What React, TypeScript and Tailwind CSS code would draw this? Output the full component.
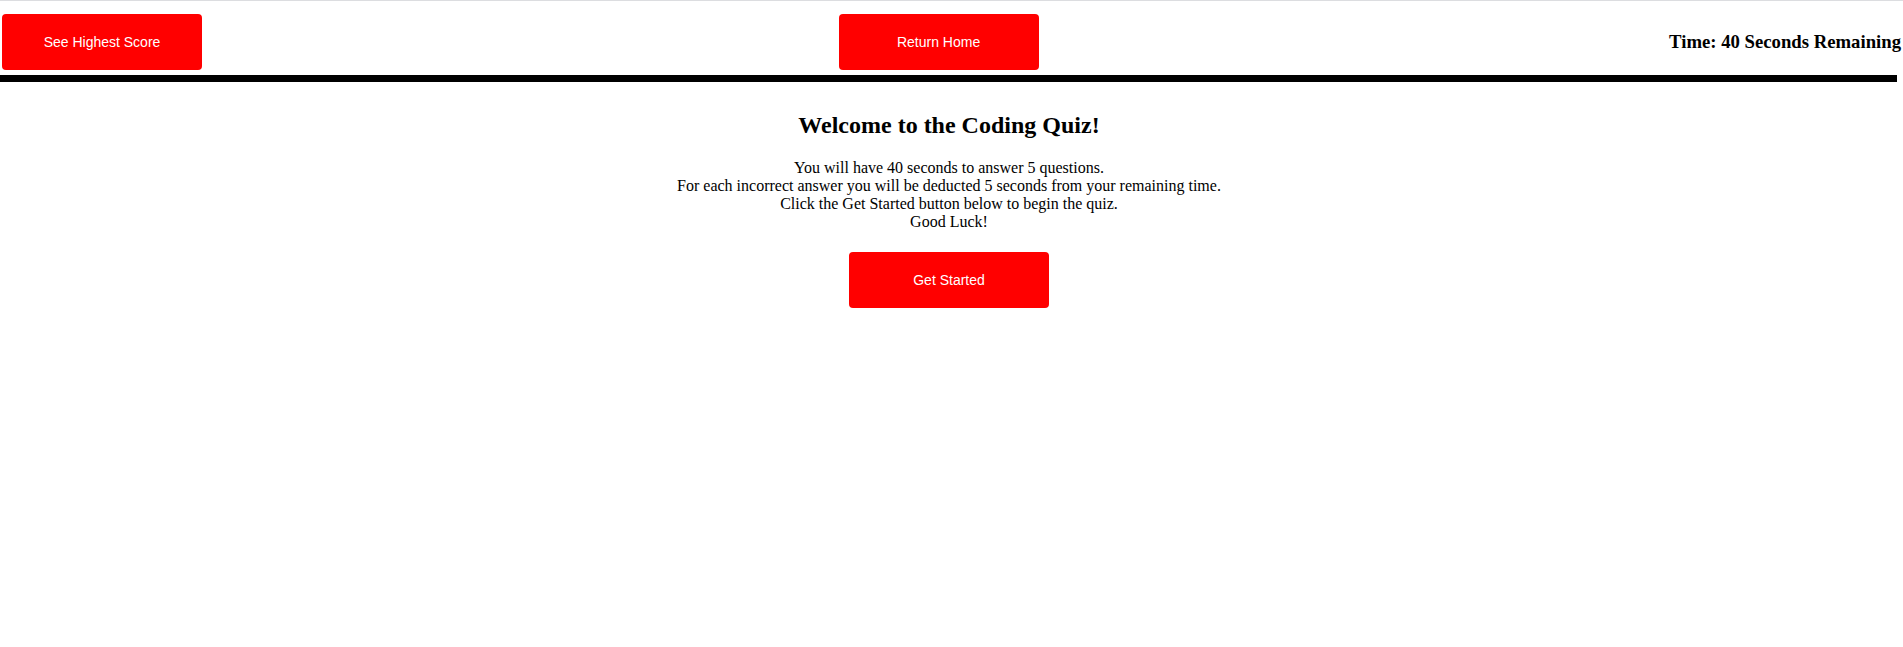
export default function App() {
  return (
    <div className="min-h-[647px] bg-white text-black font-['Liberation_Serif',serif]">
      <header className="flex items-center justify-between border-t border-[#dcdde0] pl-[2px] pr-[2px] pt-[13px] pb-[5px]">
        <button className="h-[56px] w-[200px] rounded-[4px] bg-[#ff0000] font-['Liberation_Sans',Arial,sans-serif] text-[14px] text-white">
          See Highest Score
        </button>
        <button className="ml-[6px] h-[56px] w-[200px] rounded-[4px] bg-[#ff0000] font-['Liberation_Sans',Arial,sans-serif] text-[14px] text-white">
          Return Home
        </button>
        <h3 className="text-[18.72px] font-bold">Time: 40 Seconds Remaining</h3>
      </header>
      <div className="mr-[6px] h-[7px] bg-black" />

      <main className="mt-[29px] flex flex-col items-center pr-[5px] text-center">
        <h2 className="text-[24px] font-bold leading-[28px]">Welcome to the Coding Quiz!</h2>
        <p className="mt-[20px] text-[16px] leading-[18px]">
          You will have 40 seconds to answer 5 questions.
          <br />
          For each incorrect answer you will be deducted 5 seconds from your remaining time.
          <br />
          Click the Get Started button below to begin the quiz.
          <br />
          Good Luck!
        </p>
        <button className="mt-[21px] h-[56px] w-[200px] rounded-[4px] bg-[#ff0000] font-['Liberation_Sans',Arial,sans-serif] text-[14px] text-white">
          Get Started
        </button>
      </main>
    </div>
  );
}
